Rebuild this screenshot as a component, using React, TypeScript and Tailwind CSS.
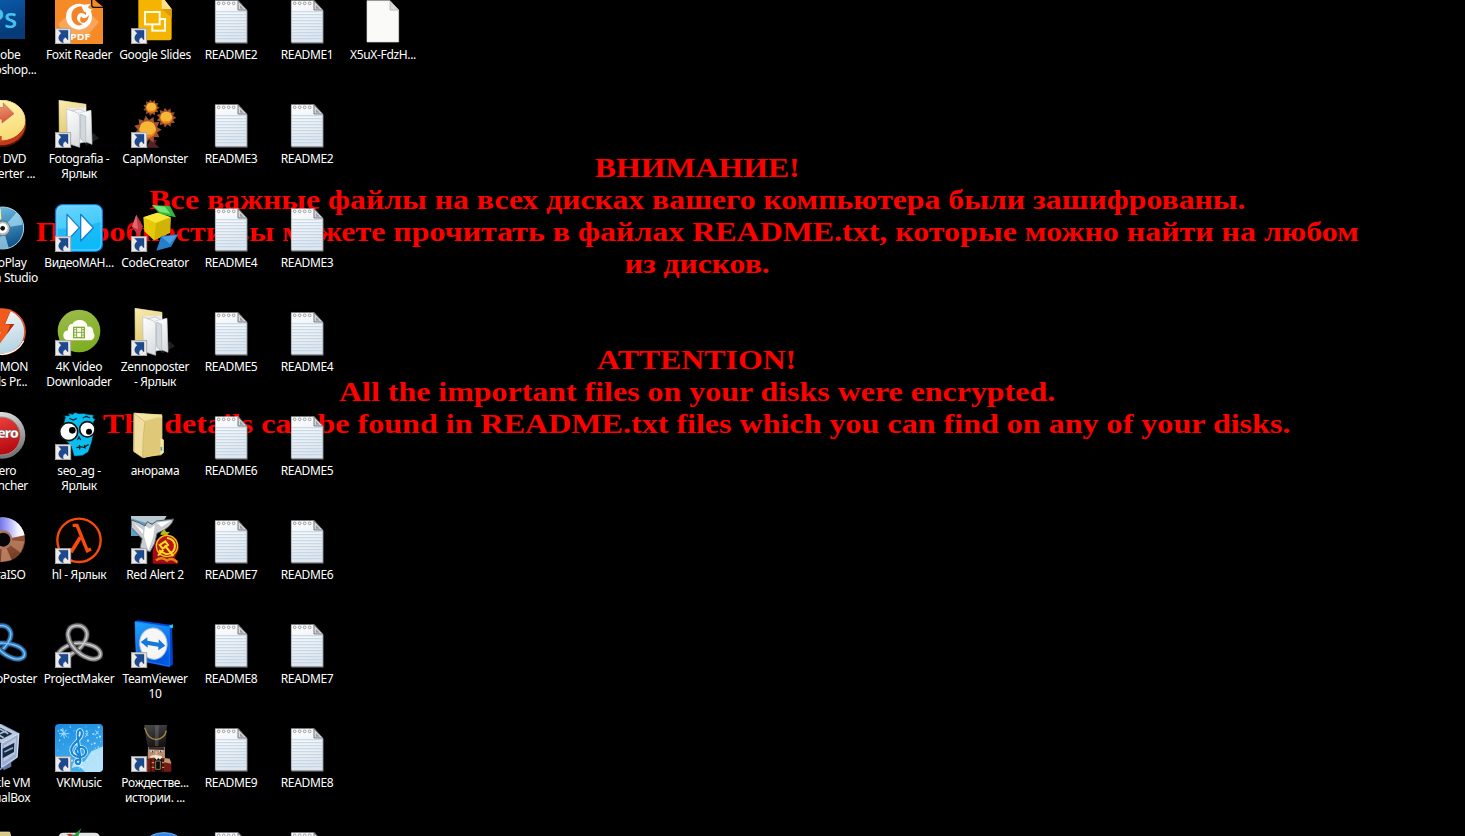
import React from "react";

type Item = { lines: string[]; art: React.ReactNode; shortcut?: boolean };

function ShortcutArrow() {
  return (
    <g>
      <rect x="1" y="98" width="46" height="45" fill="#ece9e6" stroke="#a9a9ab" strokeWidth="3" />
      <path d="M11 103H39V132L31 124C25 128 22 133 25 141C10 137 6 122 19 112Z" fill="#1d4a8f" stroke="#16376f" strokeWidth="1" />
    </g>
  );
}

const notepad = (
  <g>
    <path d="M26 17H96L122 44V143H26Z" fill="#55585c" />
    <path d="M25 14H94L119 42V139H25Z" fill="url(#paper)" stroke="#c9cdd3" strokeWidth="1.5" />
    {[47, 56, 65, 74, 83, 92, 101, 110, 119, 128].map((y) => (
      <path key={y} d={`M26 ${y}H118`} stroke="#b9d2e2" strokeWidth="2.6" />
    ))}
    {[35, 50, 65, 80].map((x) => (
      <circle key={x} cx={x} cy="22" r="4" fill="#fff" stroke="#85888d" strokeWidth="2.5" />
    ))}
    <path d="M93 15V42H120Z" fill="#d5d7da" stroke="#77797d" strokeWidth="3" />
    <path d="M99 27L110 38H99Z" fill="#999ca0" />
  </g>
);

const blankFile = (
  <g>
    <path d="M24 14H93L119 42V138H24Z" fill="#fafaf9" stroke="#dedede" strokeWidth="2" />
    <path d="M93 15V42H119Z" fill="#d9d9d9" stroke="#a8a8a8" strokeWidth="2" />
  </g>
);

const photoshop = (
  <g>
    <rect x="-6" y="-8" width="144" height="137" fill="url(#psbg)" />
    <text x="115" y="97" textAnchor="end" fill="#45c3ee" fontSize="80" fontWeight="600" fontFamily="Open Sans, sans-serif">Ps</text>
  </g>
);

const foxit = (
  <g>
    <path d="M0 0H109L112 33L144 36V144H0Z" fill="#f68a26" />
    <path d="M108 0L112 34L144 36V10L130 0Z" fill="#f68a26" />
    <path d="M109 0H144V32L112 8Z" fill="#0b0602" />
    <path d="M116 9L140 32H119Q116 31 116 27Z" fill="#f68a26" />
    <path d="M110 6V26Q110 34 118 34H144" fill="none" stroke="#171008" strokeWidth="4" />
    <path d="M8 85L50 48L110 120H40ZM96 45L132 78L104 110L78 90Z" fill="#f9a65a" />
    <circle cx="72" cy="62" r="39" fill="#fff" />
    <path d="M84 31C59 29 46 46 50 67C54 85 70 94 84 84C68 80 62 68 69 57C75 48 86 50 92 58C96 48 92 38 84 31Z" fill="#f28528" />
    <path d="M78 28L108 23L97 35L113 41L102 47L112 58Q101 49 87 47Z" fill="#fff" />
    <path d="M78 61C72 74 78 83 87 80C96 77 102 68 101 57C94 68 84 70 78 61Z" fill="#f28528" />
    <text x="45" y="131" fontSize="28" fontWeight="700" textLength="61" lengthAdjust="spacingAndGlyphs" fill="#fff" fontFamily="Open Sans, sans-serif">PDF</text>
  </g>
);

const slides = (
  <g>
    <path d="M22 0H92L122 40V127Q122 133 115 133H29Q22 133 22 127Z" fill="#f4b400" />
    <path d="M92 0V39H122Z" fill="#fbe28b" />
    <path d="M92 39H122V65Z" fill="#d99d09" />
    <rect x="64" y="69" width="38" height="35" fill="none" stroke="#fffbe9" strokeWidth="6" />
    <rect x="42" y="48" width="44" height="37" fill="#f4b400" stroke="#fffbe9" strokeWidth="6" />
  </g>
);

const dvd = (
  <g>
    <ellipse cx="66" cy="79" rx="75" ry="62" fill="#4d1308" />
    <ellipse cx="65" cy="73" rx="75" ry="63" fill="#c03b16" />
    <ellipse cx="64" cy="60" rx="74" ry="60" fill="url(#yellowdisc)" stroke="#f6dc8c" strokeWidth="3" />
    <path d="M10 105L68 108V125Q40 131 10 122Z" fill="#d04a1b" />
    <path d="M45 22L73 23V9L105 41L69 69V58L45 53Z" fill="url(#coral)" stroke="#b8644b" strokeWidth="2" />
  </g>
);

const openFolder = (
  <g>
    <path d="M92 137L132 115L116 100L93 115Z" fill="#202023" />
    <path d="M12 1L93 13V46L49 132L13 112Z" fill="url(#folder)" stroke="#f6e7a7" strokeWidth="2" />
    <path d="M35 25L93 22V112L52 128L37 116Z" fill="#e9eaec" />
    <path d="M42 34L74 27L95 40V125L60 132Z" fill="#f4f5f6" stroke="#b9bdc1" strokeWidth="2" />
    <path d="M71 39L108 31L111 133L79 119Z" fill="url(#sheet)" stroke="#d0d3d6" strokeWidth="2" />
    <path d="M35 27L66 38Q74 43 74 53L74 142L37 130Z" fill="url(#sheet)" stroke="#b8bdc2" strokeWidth="2" />
    <path d="M76 42L92 49V129L77 116Z" fill="#d2d8df" stroke="#aeb4bb" strokeWidth="2" />
  </g>
);

function Gear({ x, y, r }: { x: number; y: number; r: number }) {
  const points = Array.from({ length: 22 }, (_, i) => {
    const radius = i % 2 ? r * 0.7 : r;
    const a = (i * Math.PI) / 11;
    return `${x + Math.cos(a) * radius},${y + Math.sin(a) * radius}`;
  }).join(" ");
  return (
    <g>
      <polygon points={points} fill="#a0532c" />
      <circle cx={x} cy={y} r={r * 0.6} fill="url(#orange)" />
      <path d={`M${x - r * 0.6} ${y}L${x - r * 0.4} ${y - r * 0.5}H${x + r * 0.4}L${x + r * 0.6} ${y}L${x + r * 0.3} ${y + r * 0.35}H${x - r * 0.3}Z`} fill="#f7b736" />
    </g>
  );
}

const gears = (
  <g>
    <Gear x={61} y={23} r={25} />
    <Gear x={106} y={53} r={30} />
    <path d="M58 115L77 121L73 132L86 143H48Z" fill="#552027" />
    <Gear x={50} y={89} r={42} />
  </g>
);

const blueDisc = (
  <g>
    <circle cx="71" cy="72" r="63" fill="url(#discblue)" stroke="#a7d8f0" strokeWidth="3" />
    <path d="M72 72L113 25Q126 39 130 62Z" fill="#aae1fb" opacity=".7" />
    <path d="M72 72L89 131Q70 136 54 130Z" fill="#bae8fa" opacity=".65" />
    <path d="M55 8L65 15L67 45L53 52Z" fill="#fff08b" />
    <circle cx="71" cy="73" r="22" fill="#bdbcb6" stroke="#58748a" strokeWidth="3" />
    <circle cx="71" cy="73" r="15" fill="#fff" />
    <circle cx="71" cy="73" r="7" fill="#111" />
  </g>
);

const fastForward = (
  <g>
    <rect x="2" y="2" width="140" height="140" rx="20" fill="url(#sky)" stroke="#0876df" strokeWidth="4" />
    <rect x="6" y="6" width="132" height="132" rx="16" fill="none" stroke="#8de3ff" strokeWidth="2" />
    <path d="M8 74Q67 76 137 53V121Q136 136 120 136H24Q8 136 8 121Z" fill="#00a7f0" opacity=".45" />
    <path d="M36 31L73 71L36 111ZM77 31L115 71L77 111Z" fill="#fff" stroke="#127fd0" strokeWidth="4" strokeLinejoin="round" />
  </g>
);

const cubes = (
  <g>
    <path d="M16 32L36 67L24 98L3 68Z" fill="#c43642" />
    <path d="M16 32L21 76L3 68Z" fill="#e06970" />
    <path d="M62 3L117 6L135 40L87 31Z" fill="#31b63e" />
    <path d="M65 4L102 8L118 29L87 24Z" fill="#77e477" />
    <path d="M37 40L79 26L119 40L117 86L69 109L40 82Z" fill="#e6ca09" />
    <path d="M37 40L79 26L119 40L75 57Z" fill="#f8e835" />
    <path d="M75 57L119 40L117 86L69 109Z" fill="#cfb403" />
    <path d="M91 96L142 91L120 128L76 140Z" fill="#267ecb" />
    <path d="M92 98L137 94L117 120Z" fill="#4b9ee2" />
  </g>
);

const daemon = (
  <g>
    <circle cx="70" cy="71" r="68" fill="url(#whiteball)" stroke="#df572b" strokeWidth="5" />
    <path d="M59 3L97 5L78 48H106L49 126L65 72H39Z" fill="#f15c1e" />
    <path d="M96 5L78 48L106 48L83 79L94 50L76 49Z" fill="#b22c0d" />
    <path d="M5 90Q23 136 70 139Q115 135 134 99" fill="none" stroke="#fff" strokeWidth="4" />
  </g>
);

const cloudVideo = (
  <g>
    <circle cx="72" cy="69" r="64" fill="url(#green)" />
    <path d="M38 97Q24 94 25 80Q27 68 39 67Q38 48 53 47Q60 34 78 36Q95 39 98 56Q115 54 115 73Q124 89 109 97Z" fill="#fffef6" />
    <rect x="56" y="58" width="32" height="31" fill="none" stroke="#80ac36" strokeWidth="4" />
    <path d="M65 57V89M80 57V89M65 73H80M56 65H64M56 73H64M56 81H64M81 65H88M81 73H88M81 81H88" stroke="#80ac36" strokeWidth="3" />
  </g>
);

const nero = (
  <g>
    <circle cx="69" cy="70" r="70" fill="url(#silver)" />
    <circle cx="67" cy="72" r="57" fill="url(#redball)" stroke="#919191" strokeWidth="3" />
    <text x="116" y="77" textAnchor="end" fontSize="43" fontWeight="800" letterSpacing="-4" fill="#fff" stroke="#505050" strokeWidth="1" fontFamily="Open Sans, sans-serif">nero</text>
  </g>
);

const zombie = (
  <g>
    <path d="M26 34L31 15L24 11L43 11L39 4L54 7L60 1L72 5L84 4L98 7L117 9L113 17L121 21L115 32L119 52L110 91L100 120L82 131L57 133L48 101L33 87L20 60Z" fill="#08bef0" stroke="#071519" strokeWidth="2" />
    <path d="M43 19L55 24L65 19M83 18L94 13L105 18" fill="none" stroke="#062d3a" strokeWidth="4" />
    <circle cx="41" cy="59" r="27" fill="#fff" stroke="#111" strokeWidth="5" />
    <circle cx="97" cy="52" r="23" fill="#fff" stroke="#111" strokeWidth="5" />
    <circle cx="52" cy="55" r="10" /><circle cx="102" cy="59" r="9" />
    <path d="M67 84L72 75L77 84M64 107L76 104L86 106L101 98M73 99L74 112M88 99L91 110" fill="none" stroke="#102129" strokeWidth="4" />
  </g>
);

const folder = (
  <g>
    <path d="M9 4L93 7V80L98 84V121L91 130L39 136L8 117Z" fill="#d1b85b" />
    <path d="M9 3L93 10V123L38 137L8 118Z" fill="url(#folder)" stroke="#f3e4a2" strokeWidth="2" />
    <path d="M39 28L82 16L93 19V123L37 133Z" fill="#dfc978" />
    <path d="M9 4L42 29Q35 70 35 137L9 119Z" fill="#f0dfa0" stroke="#c5af60" strokeWidth="2" />
    <path d="M88 79L98 83V123L88 127Z" fill="#f7e5a1" />
    <path d="M91 105V116" stroke="#50a0ca" strokeWidth="5" />
  </g>
);

const iso = (
  <g>
    <circle cx="71" cy="71" r="67" fill="url(#copper)" />
    <path d="M5 85A67 67 0 0 1 137 58L71 71Z" fill="url(#violet)" />
    <path d="M71 71L137 76L125 110Z" fill="#c48967" opacity=".7" />
    <path d="M71 71L98 132L65 138Z" fill="#cf9473" opacity=".7" />
    <circle cx="71" cy="71" r="29" fill="#aa7561" />
    <circle cx="73" cy="71" r="21" fill="#050505" />
  </g>
);

const lambda = (
  <g>
    <circle cx="72" cy="73" r="65" fill="#060302" stroke="#f84b08" strokeWidth="7" />
    <path d="M53 28H66L97 104L108 99" fill="none" stroke="#f84b08" strokeWidth="10" />
    <path d="M76 64L48 109" stroke="#f84b08" strokeWidth="11" />
  </g>
);

const redAlert = (
  <g>
    <path d="M0 3H105L74 60H0Z" fill="#579fcb" />
    <path d="M0 0H107L91 21H45L0 7Z" fill="#b7c9d1" />
    <path d="M1 12Q29 20 42 30L49 17L63 25L77 15L128 9Q121 36 78 52L71 83L57 108L27 95L33 68L1 35Z" fill="#c8ccd0" stroke="#555b63" strokeWidth="3" />
    <path d="M42 29L56 38L72 27L67 61L52 104L39 60ZM77 20L119 14L92 33ZM9 22L36 42V54Z" fill="#fff" />
    <path d="M98 43L111 60L136 69L144 99L131 126L144 143H65V105L76 73L94 65Z" fill="#a5091a" />
    <path d="M100 40L106 48L116 48L109 57L88 56L90 50Z" fill="#b8ba18" />
    <circle cx="108" cy="90" r="32" fill="#bc121c" stroke="#e9c516" strokeWidth="4" />
    <path d="M86 87L103 76L111 87L95 98ZM101 88L127 120M108 66C140 68 140 113 106 115L84 103M81 119L97 101" fill="none" stroke="#ffe21a" strokeWidth="6" />
    <path d="M75 133Q93 120 108 134Q122 122 139 139" stroke="#df8814" strokeWidth="7" fill="none" />
  </g>
);

function Knot({ blue = false }: { blue?: boolean }) {
  const color = blue ? "#2e78bc" : "#858585";
  const shine = blue ? "#80c4f7" : "#d2d2d2";
  const loops = "M52 100C80 88 105 50 92 30C81 12 43 10 39 40C37 66 60 96 90 110C116 124 140 116 136 98C130 76 80 64 52 72C20 82 -2 104 12 117C24 126 42 108 52 100Z";
  return (
    <g>
      <path d={loops} fill="none" stroke="#202429" strokeWidth="18" />
      <path d={loops} fill="none" stroke={color} strokeWidth="13" />
      <path d={loops} fill="none" stroke={shine} strokeWidth="4" />
      <path d="M40 51Q46 81 76 102" fill="none" stroke="#303236" strokeWidth="17" />
      <path d="M39 46Q43 79 78 103" fill="none" stroke={color} strokeWidth="13" />
      <path d="M39 45Q43 79 79 104" fill="none" stroke={shine} strokeWidth="4" />
    </g>
  );
}

const teamViewer = (
  <g>
    <path d="M12 5L20 1L123 15L126 133L115 142L16 121Z" fill="#0044cc" />
    <path d="M12 5L115 21V138L16 119Z" fill="url(#teamblue)" stroke="#1f91ff" strokeWidth="2" />
    <ellipse cx="67" cy="71" rx="41" ry="47" transform="rotate(-8 67 71)" fill="#f7f6f4" stroke="#b5c2d6" strokeWidth="3" />
    <path d="M29 66L49 52V62L83 68V58L103 77L82 91V80L50 75V83Z" fill="#1578da" />
    <path d="M113 17L126 13V23L119 25Z" fill="#16cdf7" />
  </g>
);

const virtualBox = (
  <g>
    <path d="M68 125L97 110V128L74 139Z" fill="#68779c" />
    <path d="M8 31L64 1L119 29L114 99L64 136L11 104Z" fill="#152b54" stroke="#708bbd" strokeWidth="5" />
    <path d="M8 31L64 1L119 29L68 58Z" fill="#bccbe0" />
    <path d="M25 30L64 11L100 29L68 46Z" fill="#172a42" />
    <path d="M32 29L64 16L88 29M47 36L83 20M42 24L74 41" stroke="#a8c0d4" strokeWidth="5" fill="none" />
    <path d="M68 58L119 29L114 99L68 130Z" fill="#9caed0" stroke="#dce6f7" strokeWidth="3" />
    <path d="M74 65L111 42L108 89L74 113Z" fill="#bdc8df" />
    <path d="M71 74L106 56L105 84L71 103Z" fill="#132b44" />
    <path d="M76 84L102 71" stroke="#98afbe" strokeWidth="5" />
  </g>
);

const music = (
  <g>
    <rect width="144" height="144" rx="12" fill="url(#musicbg)" />
    <path d="M90 144C78 128 64 124 50 133L54 117Q72 110 88 114L109 82L144 67V133Q143 144 132 144Z" fill="#d9f3ff" opacity=".75" />
    {Array.from({ length: 65 }, (_, i) => (
      <circle key={i} cx={8 + ((i * 37) % 132)} cy={7 + ((i * 61) % 132)} r={0.8 + (i % 4) * 0.8} fill="#e5f8ff" opacity=".75" />
    ))}
    <path d="M18 17L36 39M35 17L17 38M12 29H43M23 13L28 44M91 27L100 36M99 25L91 39M121 19L131 31M131 20L120 34" stroke="#9fe0ff" strokeWidth="3" />
    <path d="M75 112Q75 124 65 119C57 111 66 104 76 108L68 35C67 13 83 13 80 32C78 49 47 59 49 79C51 104 92 105 93 85C94 66 66 63 64 79C62 89 70 94 77 90" fill="none" stroke="#fff" strokeWidth="11" />
    <path d="M75 112Q75 124 65 119C57 111 66 104 76 108L68 35C67 13 83 13 80 32C78 49 47 59 49 79C51 104 92 105 93 85C94 66 66 63 64 79C62 89 70 94 77 90" fill="none" stroke="#1687d8" strokeWidth="7" />
  </g>
);

const nutcracker = (
  <g>
    <path d="M40 3H108L103 72H50Z" fill="url(#hat)" />
    <path d="M72 4H84L82 66H72Z" fill="#77777a" opacity=".4" />
    <path d="M41 11Q51 47 76 47Q101 44 106 20" fill="none" stroke="#a88c42" strokeWidth="4" />
    <path d="M51 69L102 70V104H50Z" fill="#b88c70" />
    <path d="M53 69L98 70L101 78L53 76Z" fill="#392422" />
    <path d="M58 81H69M84 81H95" stroke="#b8dce5" strokeWidth="5" />
    <path d="M65 80V85M89 80V85" stroke="#172a35" strokeWidth="3" />
    <path d="M76 82V91" stroke="#dfb18e" strokeWidth="6" />
    <path d="M58 99L73 95L92 99" fill="none" stroke="#ece1cd" strokeWidth="6" />
    <path d="M47 108L58 103H100L121 110V143H47Z" fill="#771914" />
    <path d="M101 102L116 104L121 119L99 115Z" fill="#b99b72" />
    <path d="M60 107V143M97 107V143" stroke="#36100d" strokeWidth="4" />
    <path d="M62 116H70M62 130H70M93 116H100M93 130H100" stroke="#d8ae52" strokeWidth="3" />
    <rect x="71" y="103" width="21" height="40" fill="#080909" />
    <path d="M74 111H88V136H74Z" fill="none" stroke="#bcae91" strokeWidth="2" />
    <path d="M69 99H94L87 107L82 102L77 108Z" fill="#eee7da" />
  </g>
);

const partialFolder = <path d="M10 12H92L97 30H10Z" fill="#d7ca83" stroke="#eee7bb" strokeWidth="2" />;
const partialCheck = (
  <g>
    <path d="M10 28Q13 14 25 14H120Q132 14 136 28Z" fill="#e1e3e3" />
    <path d="M47 18L58 20L79 1L69 27H58Z" fill="#279b3a" />
    <path d="M35 19L48 17L55 26H43Z" fill="#c43e31" />
  </g>
);
const partialBall = <ellipse cx="99" cy="42" rx="52" ry="28" fill="#3185e6" stroke="#72bcf9" strokeWidth="3" />;

const columns: Item[][] = [
  [
    { lines: ["Adobe", "Photoshop..."], art: photoshop },
    { lines: ["Any DVD", "Converter ..."], art: dvd },
    { lines: ["AutoPlay", "Media Studio"], art: blueDisc },
    { lines: ["DAEMON", "Tools Pr..."], art: daemon },
    { lines: ["Nero", "Launcher"], art: nero },
    { lines: ["UltraISO"], art: iso },
    { lines: ["ZennoPoster"], art: <Knot blue /> },
    { lines: ["Oracle VM", "VirtualBox"], art: virtualBox },
    { lines: [], art: partialFolder },
  ],
  [
    { lines: ["Foxit Reader"], art: foxit, shortcut: true },
    { lines: ["Fotografia -", "Ярлык"], art: openFolder, shortcut: true },
    { lines: ["ВидеоМАН..."], art: fastForward, shortcut: true },
    { lines: ["4K Video", "Downloader"], art: cloudVideo, shortcut: true },
    { lines: ["seo_ag -", "Ярлык"], art: zombie, shortcut: true },
    { lines: ["hl - Ярлык"], art: lambda, shortcut: true },
    { lines: ["ProjectMaker"], art: <Knot />, shortcut: true },
    { lines: ["VKMusic"], art: music, shortcut: true },
    { lines: [], art: partialCheck },
  ],
  [
    { lines: ["Google Slides"], art: slides, shortcut: true },
    { lines: ["CapMonster"], art: gears, shortcut: true },
    { lines: ["CodeCreator"], art: cubes, shortcut: true },
    { lines: ["Zennoposter", "- Ярлык"], art: openFolder, shortcut: true },
    { lines: ["анорама"], art: folder },
    { lines: ["Red Alert 2"], art: redAlert, shortcut: true },
    { lines: ["TeamViewer", "10"], art: teamViewer, shortcut: true },
    { lines: ["Рождестве...", "истории. ..."], art: nutcracker, shortcut: true },
    { lines: [], art: partialBall },
  ],
  Array.from({ length: 9 }, (_, i) => ({ lines: i < 8 ? [`README${i + 2}`] : [], art: notepad })),
  Array.from({ length: 9 }, (_, i) => ({ lines: i < 8 ? [`README${i + 1}`] : [], art: notepad })),
  [{ lines: ["X5uX-FdzH..."], art: blankFile }],
];

const gradients: [string, string, string][] = [
  ["paper", "#ffffff", "#dfe6ef"], ["psbg", "#0b64b8", "#063a78"], ["coral", "#f3a281", "#d75b3b"],
  ["yellowdisc", "#fff8bb", "#f9dc77"], ["folder", "#f8ebb0", "#ddc565"], ["sheet", "#ffffff", "#dde0e3"],
  ["orange", "#ffc735", "#ee7b14"], ["discblue", "#79c8ed", "#12578d"], ["sky", "#75d3fb", "#18c8ff"],
  ["whiteball", "#ffffff", "#b8d5e4"], ["green", "#9cbb4d", "#80ae22"], ["silver", "#eeeeee", "#777777"],
  ["redball", "#f04842", "#b80b12"], ["copper", "#bd704c", "#784029"], ["teamblue", "#22a5ff", "#0057df"],
  ["musicbg", "#1b8be2", "#45b2ee"], ["hat", "#49494b", "#141416"],
];

function DesktopItem({ item }: { item: Item }) {
  return (
    <div className="flex h-[104px] w-[76px] shrink-0 flex-col items-center gap-[3px]">
      <svg className="h-12 w-12 shrink-0" viewBox="0 0 144 144">
        {item.art}
        {item.shortcut && <ShortcutArrow />}
      </svg>
      <div className="flex flex-col items-center whitespace-nowrap font-['Noto_Sans','Open_Sans',sans-serif] text-[12px] leading-[15px] tracking-[-0.35px] text-white">
        {item.lines.map((line) => <span key={line}>{line}</span>)}
      </div>
    </div>
  );
}

export default function App() {
  return (
    <div className="relative h-[836px] w-[1465px] overflow-hidden bg-black">
      <svg className="absolute h-0 w-0">
        <defs>
          {gradients.map(([id, from, to]) => (
            <linearGradient key={id} id={id} x1="0" y1="0" x2=".3" y2="1">
              <stop stopColor={from} /><stop offset="1" stopColor={to} />
            </linearGradient>
          ))}
          <linearGradient id="violet">
            <stop offset=".3" stopColor="#4a4ec9" /><stop offset=".6" stopColor="#9ea1fa" />
            <stop offset=".85" stopColor="#f4f3ff" /><stop offset="1" stopColor="#ffffff" />
          </linearGradient>
        </defs>
      </svg>
      <div className="absolute inset-0 flex w-[1394px] flex-col items-center gap-16 whitespace-nowrap pt-[152px] text-center font-['Liberation_Serif',serif] text-[28px] font-bold leading-8 text-[#ff0000]">
        <div className="flex flex-col items-center">
          <p className="scale-x-[1.136]">ВНИМАНИЕ!</p>
          <p className="scale-x-[1.134]">Все важные файлы на всех дисках вашего компьютера были зашифрованы.</p>
          <p className="scale-x-[1.14]">Подробности вы можете прочитать в файлах README.txt, которые можно найти на любом</p>
          <p className="scale-x-[1.13]">из дисков.</p>
        </div>
        <div className="flex flex-col items-center">
          <p className="scale-x-[1.136]">ATTENTION!</p>
          <p className="scale-x-[1.14]">All the important files on your disks were encrypted.</p>
          <p className="scale-x-[1.145]">The details can be found in README.txt files which you can find on any of your disks.</p>
        </div>
      </div>
      <main className="relative -ml-[35px] -mt-1 flex">
        {columns.map((column, i) => (
          <div key={i} className="flex flex-col">
            {column.map((item, row) => <DesktopItem key={row} item={item} />)}
          </div>
        ))}
      </main>
    </div>
  );
}
